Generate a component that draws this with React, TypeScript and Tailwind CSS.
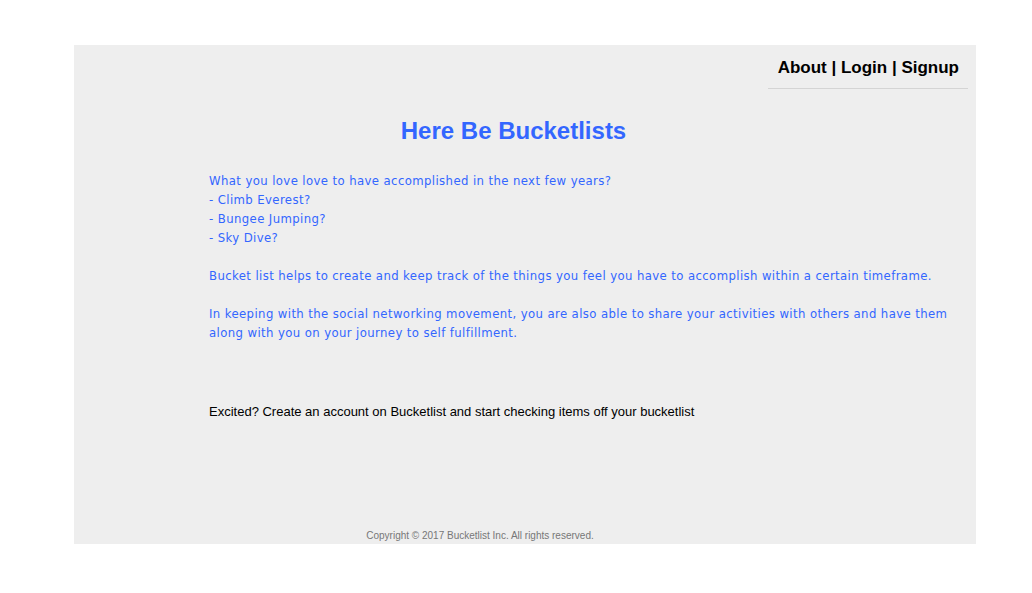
export default function App() {
  const blue = "text-[#3366ff]";
  return (
    <div className="bg-white w-[1032px] h-[593px] pt-[45px] pl-[74px]">
      <div className="bg-[#eeeeee] w-[902px] h-[499px] flex flex-col">
        <div className="flex justify-end pr-[8px] pt-[11px]">
          <div className="w-[200px] border-b border-[#d4d4d4] pb-[8px] pr-[9px] text-right font-['Liberation_Sans',Arial,sans-serif] font-bold text-[17px] leading-[24px] text-black">
            About | Login | Signup
          </div>
        </div>
        <div className="pl-[135px] pr-[20px]">
          <h1 className={`mt-[28px] w-[609px] text-center font-['Liberation_Sans',Arial,sans-serif] font-bold text-[24px] leading-[28px] ${blue}`}>
            Here Be Bucketlists
          </h1>
          <div className={`mt-[26px] font-['DejaVu_Sans_Condensed','DejaVu_Sans',sans-serif] text-[13px] leading-[19px] tracking-[0.39px] ${blue}`}>
            What you love love to have accomplished in the next few years?
            <br />- Climb Everest?
            <br />- Bungee Jumping?
            <br />- Sky Dive?
            <br />
            <br />
            Bucket list helps to create and keep track of the things you feel you have to accomplish within a certain timeframe.
            <br />
            <br />
            In keeping with the social networking movement, you are also able to share your activities with others and have them along with you on your journey to self fulfillment.
          </div>
          <p className="mt-[62px] font-['Liberation_Sans',Arial,sans-serif] text-[13px] leading-[16px] text-black">
            Excited? Create an account on Bucketlist and start checking items off your bucketlist
          </p>
        </div>
        <div className="mt-auto pb-[2px] w-[812px] text-center font-['Liberation_Sans',Arial,sans-serif] text-[10px] leading-[13px] text-[#777777]">
          Copyright © 2017 Bucketlist Inc. All rights reserved.
        </div>
      </div>
    </div>
  );
}
